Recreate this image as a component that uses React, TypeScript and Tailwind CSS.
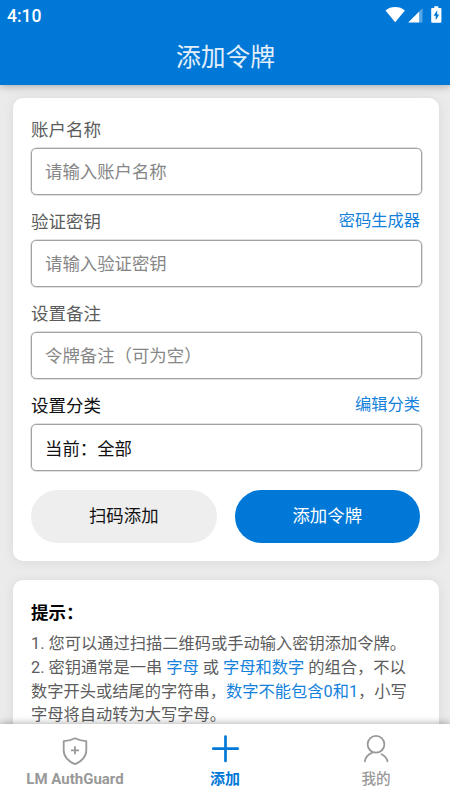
import type { ReactNode } from 'react'

type FieldProps = {
	label: string
	text: string
	action?: string
	filled?: boolean
}

const Field = ({ label, text, action, filled }: FieldProps) => {
	return (
		<div className="mb-[9px]">
			<div className="flex h-9 items-center justify-between pr-[2px]">
				<label
					className={`text-[17.5px] ${filled ? 'text-[#111111]' : 'text-[#5c5c5c]'}`}
				>
					{label}
				</label>
				{action && (
					<button className="-mt-px text-[16.25px] text-[#1482dc]">{action}</button>
				)}
			</div>
			{filled ? (
				<div className="flex h-[47px] items-center rounded-[5px] border border-[#a2a2a2] px-[13px] pt-[3px] text-[17.4px] text-[#111111] shadow-[0_0_0_0.5px_#c4c4c4]">
					{text}
				</div>
			) : (
				<input
					placeholder={text}
					className="block h-[47px] w-full rounded-[5px] border border-[#a2a2a2] px-[13px] text-[17.4px] shadow-[0_0_0_0.5px_#c4c4c4] outline-none placeholder:text-[#868686]"
				/>
			)}
		</div>
	)
}

const Mark = ({ children }: { children: ReactNode }) => (
	<span className="text-[#1482dc]">{children}</span>
)

const StatusBar = () => {
	return (
		<div className="flex h-8 items-center justify-between pl-[7px] pr-[7px] text-white">
			<span className="font-[Roboto] text-[17.5px] font-medium">4:10</span>
			<svg className="h-8 w-[60px]" viewBox="0 0 60 32" fill="white">
				<path d="M2.500 10.500C5.200 8 8.400 7 12.200 7s7 1 9.700 3.500L12.200 22.300z" />
				<path d="M25.200 22.600 36.200 11.600v11z" />
				<path d="M36.200 11.600 39.500 8.300v14.300h-3.300z" opacity="0.35" />
				<path
					fillRule="evenodd"
					d="M51.300 6.300h4v1.600h2.200c.5 0 .9.400.9.900v13c0 .5-.4.900-.9.900h-8.400c-.5 0-.9-.4-.9-.9v-13c0-.5.4-.9.900-.9h2.200zM54.200 10.200l-3.600 5.500h2.100v4.500l3.500-5.700h-2z"
				/>
			</svg>
		</div>
	)
}

const NavBar = () => {
	return (
		<nav className="relative grid h-[76px] shrink-0 grid-cols-3 bg-white text-[#999999] shadow-[0_-1px_7px_rgba(0,0,0,0.3)]">
			<div className="flex flex-col items-center pt-[9px]">
				<svg className="h-8 w-8" viewBox="0 0 32 32" fill="none" stroke="currentColor" strokeWidth="1.8" strokeLinejoin="round">
					<path d="M16 5.300C12.500 7 8.500 8 4.700 8.200v9.300c0 6 4.800 11.200 11.300 13.600 6.500-2.400 11.300-7.600 11.300-13.600V8.200C23.500 8 19.500 7 16 5.300z" />
					<path d="M16 13.300v8M12 17.300h8" />
				</svg>
				<span className="mt-1 font-[Roboto] text-[15px] leading-5 font-bold">
					LM AuthGuard
				</span>
			</div>
			<div className="flex flex-col items-center pt-[9px] text-[#0078d7]">
				<svg className="h-8 w-8" viewBox="0 0 32 32" fill="none" stroke="currentColor" strokeWidth="2.7" strokeLinecap="round">
					<path d="M16.500 3.600v24.400M4.300 15.700h24.400" />
				</svg>
				<span className="mt-1 text-[15px] leading-5 font-bold">添加</span>
			</div>
			<div className="flex flex-col items-center pt-[9px]">
				<svg className="h-8 w-8" viewBox="0 0 32 32" fill="none" stroke="currentColor" strokeWidth="1.8" strokeLinecap="round">
					<circle cx="17" cy="11.300" r="8.400" />
					<path d="M13 19.800C9.300 21.300 6.500 24.400 5.800 28.300M22.600 21.300c3.100 1.600 5.200 4 5.900 7" />
				</svg>
				<span className="mt-1 pl-[2px] text-[14.600px] leading-5 font-medium">我的</span>
			</div>
		</nav>
	)
}

const App = () => {
	return (
		<div className="flex h-[800px] w-[450px] flex-col overflow-hidden bg-[#ebebeb] font-[Roboto,'Noto_Sans_CJK_SC',sans-serif]">
			<header className="relative h-[85px] shrink-0 bg-[#0078d7] shadow-[0_1px_8px_rgba(0,0,0,0.3)]">
				<StatusBar />
				<h1 className="pt-[2px] pl-px text-center text-[24.800px] leading-[48px] font-normal text-[#e3effa]">
					添加令牌
				</h1>
			</header>

			<main className="flex-1 overflow-hidden pr-[11px] pl-[12.500px] pt-[12.500px]">
				<section className="h-[463.500px] rounded-[10px] bg-white pt-[14.500px] pr-[17px] pl-[18.500px] shadow-[0_1px_12px_rgba(0,0,0,0.08)]">
					<Field label="账户名称" text="请输入账户名称" />
					<Field label="验证密钥" text="请输入验证密钥" action="密码生成器" />
					<Field label="设置备注" text="令牌备注（可为空）" />
					<Field label="设置分类" text="当前：全部" action="编辑分类" filled />
					<div className="mt-[19px] flex gap-[18px] pr-[2px] text-[17.400px]">
						<button className="h-[53px] flex-1 rounded-full bg-[#eeeeee] text-[#111111]">
							扫码添加
						</button>
						<button className="h-[53px] flex-1 rounded-full bg-[#0078d7] text-white">
							添加令牌
						</button>
					</div>
				</section>

				<section className="mt-[19px] h-[200px] rounded-[10px] bg-white pt-5 pl-[18.500px] shadow-[0_1px_12px_rgba(0,0,0,0.08)]">
					<h2 className="text-[17.500px] leading-[26px] font-bold text-black">提示：</h2>
					<div className="mt-[6px] text-[16.250px] leading-[23.800px] whitespace-nowrap text-[#5c5c5c]">
						<p>1. 您可以通过扫描二维码或手动输入密钥添加令牌。</p>
						<p>
							2. 密钥通常是一串 <Mark>字母</Mark> 或 <Mark>字母和数字</Mark> 的组合，不以
							<br />
							数字开头或结尾的字符串，<Mark>数字不能包含0和1</Mark>，小写
							<br />
							字母将自动转为大写字母。
						</p>
					</div>
				</section>
			</main>

			<NavBar />
		</div>
	)
}

export default App
